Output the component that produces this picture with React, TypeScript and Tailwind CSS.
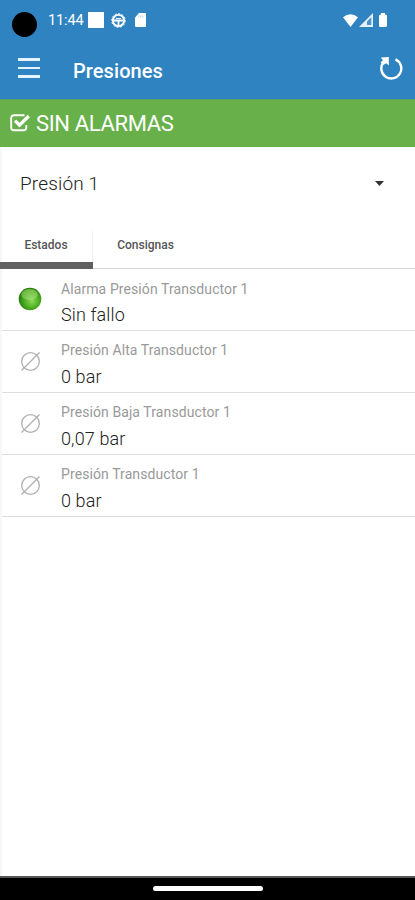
import React, { useState } from 'react';
import clsx from 'clsx';

interface Reading {
    label: string;
    value: string;
    ok?: boolean;
}

const readings: Reading[] = [
    { label: 'Alarma Presión Transductor 1', value: 'Sin fallo', ok: true },
    { label: 'Presión Alta Transductor 1', value: '0 bar' },
    { label: 'Presión Baja Transductor 1', value: '0,07 bar' },
    { label: 'Presión Transductor 1', value: '0 bar' },
];

const tabs = ['Estados', 'Consignas'];

// Android status bar
const StatusBar: React.FC = () => (
    <div className="flex h-[40px] items-center pl-3">
        <div className="mt-[9px] h-[25px] w-[25px] rounded-full bg-black" />
        <span className="mt-[2px] ml-[11px] w-[35px] text-[14.5px] leading-4 tracking-[-0.1px] whitespace-nowrap">11:44</span>
        <div className="ml-[5px] h-4 w-4 bg-white" />
        <svg className="ml-[7px] h-[15px] w-[15px]" viewBox="0 0 15 15" fill="none" stroke="currentColor">
            <circle cx="7.5" cy="7.5" r="5.6" strokeWidth="1.9" />
            <circle cx="7.5" cy="7.5" r="6.8" strokeWidth="1" strokeDasharray="2 1.5" />
            <path d="M2 7.5h11M7.5 8v5" strokeWidth="1.8" />
            <path d="M5 5.5h5" strokeWidth="1" />
        </svg>
        <svg className="ml-[9px] h-[14px] w-[11px]" viewBox="0 0 11 14">
            <path d="M4 0h6a1 1 0 0 1 1 1v12a1 1 0 0 1-1 1H1a1 1 0 0 1-1-1V4.5z" fill="currentColor" />
            <path d="M3.8 2.5v2M5.8 2.5v2M7.8 2.5v2" stroke="#b8d3ea" />
        </svg>
        <div className="mr-[27px] ml-auto flex items-center">
            <svg className="h-[13px] w-[15px]" viewBox="0 0 15 13">
                <path d="M0 3.3Q7.5-2.8 15 3.3L7.5 13z" fill="currentColor" />
            </svg>
            <svg className="ml-[1px] h-[14px] w-[14px]" viewBox="0 0 14 14">
                <path d="M0 14L14 0v14z" fill="#e6f1f9" />
                <path d="M8 8.5L12.3 4.2v7.8H8z" fill="#4b93c9" />
            </svg>
            <svg className="ml-[5px] h-[14px] w-[10px]" viewBox="0 0 10 14">
                <path d="M3 0h4v1.5h.5Q9 1.5 9 3v9.5q0 1.5-1.5 1.5h-5Q1 14 1 12.5V3q0-1.5 1.5-1.5H3z" fill="currentColor" />
            </svg>
        </div>
    </div>
);

const RefreshIcon: React.FC = () => (
    <svg className="h-6 w-6" viewBox="0 0 24 24" fill="none" stroke="currentColor">
        <path d="M16.5 3.4A10 10 0 1 1 4.3 6.5" strokeWidth="2.4" />
        <path d="M1.8 1.5L9.8 1V9.5L7.2 7.3L4.2 9L1.6 6.2L4 4.2z" fill="currentColor" stroke="none" />
    </svg>
);

const CheckIcon: React.FC = () => (
    <svg className="h-[18px] w-[21px]" viewBox="0 0 21 18" fill="none" stroke="currentColor">
        <path d="M14.5 1.2H4Q1.2 1.2 1.2 4v9.5q0 2.8 2.8 2.8h9.5q2.8 0 2.8-2.8V11" strokeWidth="1.9" />
        <path d="M5 6.6l4.5 4.5L18.8 2" strokeWidth="3.4" />
    </svg>
);

const GreenLed: React.FC = () => (
    <svg className="h-6 w-6" viewBox="0 0 24 24">
        <defs>
            <radialGradient id="led" cx="58%" cy="58%" r="62%">
                <stop offset="0" stopColor="#8fd85c" />
                <stop offset="0.45" stopColor="#55b525" />
                <stop offset="1" stopColor="#207309" />
            </radialGradient>
            <linearGradient id="gloss" x1="0" y1="0" x2="0" y2="1">
                <stop offset="0" stopColor="#b6ef70" stopOpacity="0.5" />
                <stop offset="1" stopColor="#d9f7c0" stopOpacity="0.3" />
            </linearGradient>
        </defs>
        <circle cx="12" cy="12" r="11.3" fill="url(#led)" />
        <ellipse cx="11.5" cy="7.5" rx="8.2" ry="5.4" fill="url(#gloss)" />
    </svg>
);

const EmptyIcon: React.FC = () => (
    <svg className="h-[21px] w-[21px]" viewBox="0 0 21 21" fill="none" stroke="#b0b0b0" strokeWidth="1.3">
        <circle cx="10.5" cy="10.5" r="8.8" />
        <path d="M1.5 19.5L19.5 1.5" />
    </svg>
);

const App: React.FC = () => {
    const [activeTab, setActiveTab] = useState('Estados');

    return (
        <div className="flex h-[900px] w-[415px] flex-col overflow-hidden bg-white font-['Roboto',sans-serif]">
            {/* App header */}
            <header className="h-[99px] shrink-0 bg-[#2f83c1] text-white">
                <StatusBar />
                <div className="flex h-[59px] items-center pr-[12px] pl-[18px]">
                    <button className="-mt-[3px] flex w-[22px] flex-col gap-[6px]" aria-label="Menú">
                        <span className="h-[2.5px] bg-[#e3f4ff]" />
                        <span className="h-[2.5px] bg-[#e3f4ff]" />
                        <span className="h-[2.5px] bg-[#e3f4ff]" />
                    </button>
                    <h1 className="mt-[3px] ml-[33px] text-[20px] leading-6 font-medium tracking-[0.08px]">Presiones</h1>
                    <button className="-mt-[3px] ml-auto" aria-label="Actualizar">
                        <RefreshIcon />
                    </button>
                </div>
            </header>

            <div className="flex h-12 shrink-0 items-center border-t border-[#5c9f62] bg-[#67b04a] pb-px pl-[10px] text-white">
                <CheckIcon />
                <span className="mt-px ml-[5px] text-[22px] leading-6 tracking-[-0.35px]">SIN ALARMAS</span>
            </div>

            <main className="flex min-h-0 flex-1 flex-col border-l-2 border-[#f7f7f7]">
                {/* Device selector */}
                <button className="flex h-[84px] shrink-0 items-start justify-between pt-[25px] pr-[31px] pl-[18px] text-left text-[19px] leading-6 font-light tracking-[0.15px] text-[#222]">
                    Presión 1
                    <svg className="mt-[9px] h-[5px] w-[9px]" viewBox="0 0 9 5">
                        <path d="M0 0h9L4.5 5z" fill="#333" />
                    </svg>
                </button>

                <nav className="-ml-[2px] flex h-[38px] shrink-0 border-b border-[#d4d4d4]">
                    {tabs.map((tab) => (
                        <button
                            key={tab}
                            onClick={() => setActiveTab(tab)}
                            className={clsx(
                                'flex h-[38px] flex-col text-[12px] leading-4 font-medium text-[#555]',
                                tab === 'Estados' ? 'w-[93px]' : 'w-[105px]'
                            )}
                        >
                            <span className={clsx('w-full flex-1 pt-[6px]', tab === 'Estados' && 'border-r border-[#eee]')}>{tab}</span>
                            <span className={clsx('h-[7px] w-full', activeTab === tab && 'bg-[#606060]')} />
                        </button>
                    ))}
                </nav>

                <ul>
                    {readings.map((item) => (
                        <li key={item.label} className="flex h-[61.9px] border-b border-[#dedede]">
                            <div className="flex w-[57px] items-center justify-center pr-px">
                                {item.ok ? <GreenLed /> : <EmptyIcon />}
                            </div>
                            <div className="ml-[2px] pt-[9.6px]">
                                <p className="text-[14px] leading-5 tracking-[0.09px] text-[#999]">{item.label}</p>
                                <p className="mt-[4.8px] text-[18px] leading-6 font-light tracking-[0.12px] text-[#222]">{item.value}</p>
                            </div>
                        </li>
                    ))}
                </ul>
            </main>

            {/* Gesture bar */}
            <footer className="flex h-6 shrink-0 justify-center border-t-2 border-[#555] bg-black pt-[8px]">
                <div className="h-[5px] w-[110px] rounded-full bg-white" />
            </footer>
        </div>
    );
};

export default App;
